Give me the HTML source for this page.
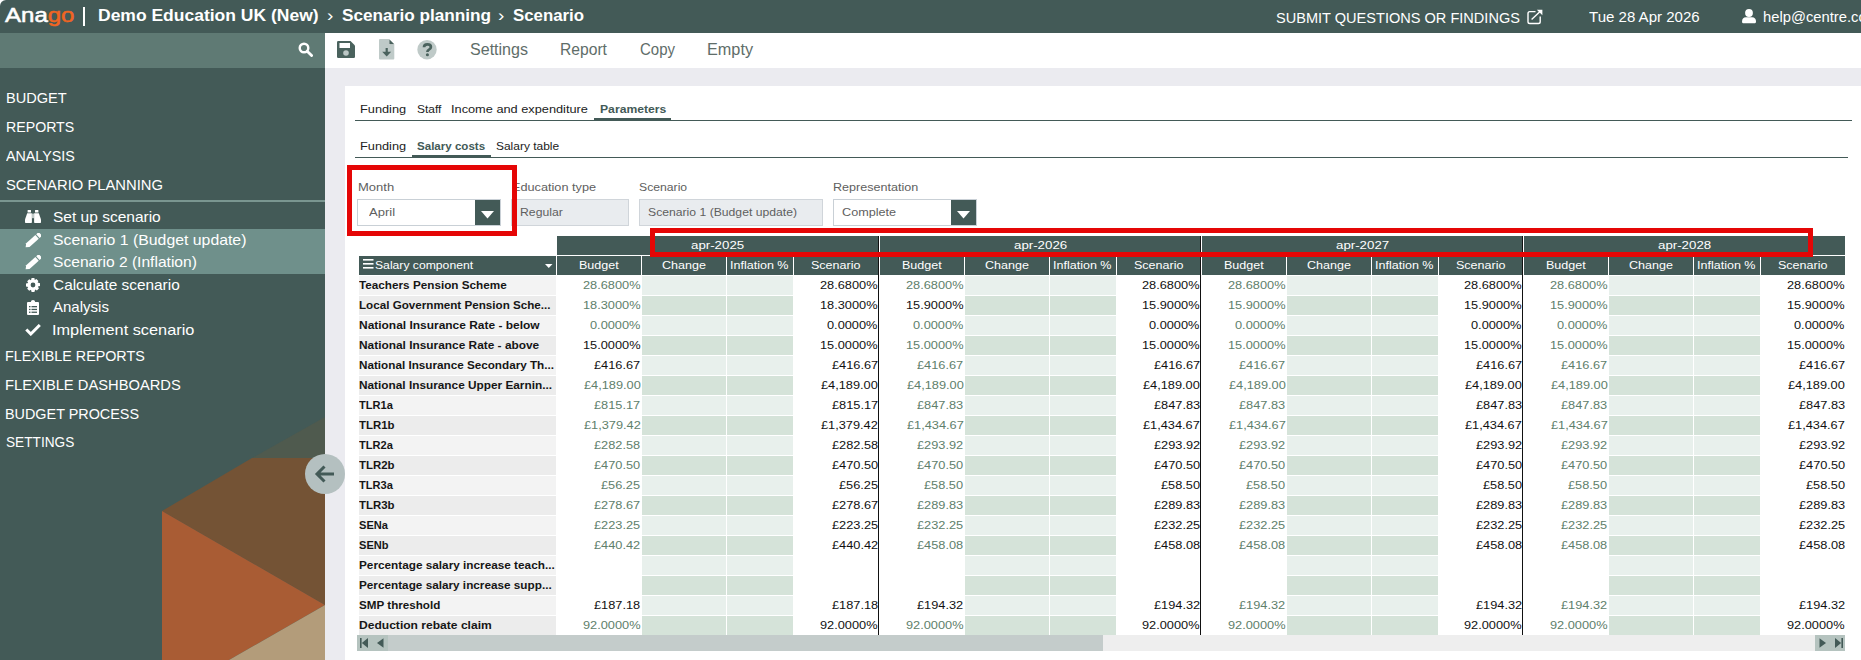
<!DOCTYPE html>
<html><head><meta charset="utf-8"><title>Scenario</title>
<style>
html,body{margin:0;padding:0;width:1861px;height:660px;overflow:hidden;background:#ebebf0}
body{position:relative;font-family:"Liberation Sans", sans-serif}
.t{position:absolute;white-space:nowrap}
</style></head><body>
<div style="position:absolute;left:0px;top:0px;width:1861px;height:660px;background:#ebebf0;"></div>
<div style="position:absolute;left:0px;top:0px;width:1861px;height:33px;background:#fff;"></div>
<div style="position:absolute;left:0px;top:0px;width:1861px;height:33px;background:#435a57;border-top-left-radius:6px;"></div>
<div style="position:absolute;left:0px;top:33px;width:325px;height:35px;background:#5f7a74;"></div>
<div style="position:absolute;left:0px;top:68px;width:325px;height:592px;background:#435a57;"></div>
<div style="position:absolute;left:325px;top:33px;width:1536px;height:35px;background:#fff;"></div>
<div style="position:absolute;left:345px;top:86px;width:1516px;height:574px;background:#fff;"></div>
<svg style="position:absolute;left:0;top:0" width="325" height="660" viewBox="0 0 325 660">
<polygon points="252,458 325,417 325,458" fill="#4f5a4e"/>
<polygon points="162,511 252,458 325,458 325,605" fill="#745335"/>
<polygon points="162,511 325,605 229,660 162,660" fill="#a95c34"/>
<polygon points="325,605 325,660 229,660" fill="#b39c7a"/>
</svg>
<div style="position:absolute;left:0px;top:229px;width:325px;height:45px;background:#6f908b;"></div>
<div style="position:absolute;left:0px;top:200px;width:325px;height:2px;background:#7a9690;"></div>
<svg style="position:absolute;left:305px;top:454px" width="40" height="40" viewBox="0 0 40 40">
<circle cx="20" cy="20" r="20" fill="#b4c0c0"/>
<path d="M12 20 H29 M19.5 12.5 L12 20 L19.5 27.5" stroke="#435a57" stroke-width="3" fill="none" stroke-linecap="butt"/>
</svg>
<div style="position:absolute;left:83.2px;top:7px;width:2px;height:19px;background:#fff;"></div>
<svg style="position:absolute;left:1526px;top:9px" width="17" height="16" viewBox="0 0 17 16">
<path d="M9.5 2.6 H3.8 Q2 2.6 2 4.4 V12.7 Q2 14.5 3.8 14.5 H12.4 Q14.2 14.5 14.2 12.7 V7.5" stroke="#fff" stroke-width="1.4" fill="none"/>
<path d="M5.6 10.6 L14.6 1.9" stroke="#fff" stroke-width="1.4" fill="none"/>
<path d="M10.8 0.7 H16.4 V6.3Z" fill="#fff"/>
</svg>
<svg style="position:absolute;left:1742px;top:9px" width="14" height="15" viewBox="0 0 14 15">
<circle cx="7" cy="4" r="3.9" fill="#fff"/>
<path d="M0 12.8 Q0 8.2 4 8.2 H10 Q14 8.2 14 12.8 Q14 14.2 13 14.2 H1 Q0 14.2 0 12.8Z" fill="#fff"/>
</svg>
<svg style="position:absolute;left:297.5px;top:42px" width="15" height="15" viewBox="0 0 15 15">
<circle cx="6" cy="6" r="4.3" stroke="#fff" stroke-width="2.4" fill="none"/>
<path d="M9.2 9.2 L13.6 13.6" stroke="#fff" stroke-width="2.8" stroke-linecap="round"/>
</svg>
<svg style="position:absolute;left:337px;top:41px" width="18" height="17" viewBox="0 0 18 17">
<path d="M1.2 0 H13.5 L18 4.5 V15.8 Q18 17 16.8 17 H1.2 Q0 17 0 15.8 V1.2 Q0 0 1.2 0Z" fill="#4a625d"/>
<rect x="2.5" y="2" width="10.5" height="5" fill="#fff"/>
<circle cx="9" cy="12" r="2.8" fill="#bcc7c5"/>
</svg>
<svg style="position:absolute;left:378.5px;top:39px" width="16" height="21" viewBox="0 0 16 21">
<path d="M1 0 H10 V5.5 H15.3 V19.5 Q15.3 20.5 14.3 20.5 H1 Q0 20.5 0 19.5 V1 Q0 0 1 0Z" fill="#bfcac8"/>
<path d="M10.3 0.3 L15.3 5.3 H10.3Z" fill="#4a625d"/>
<path d="M7.7 9 V14" stroke="#4a625d" stroke-width="2.2"/>
<path d="M3.2 12.8 H12.2 L7.7 17.6Z" fill="#4a625d"/>
</svg>
<svg style="position:absolute;left:417px;top:40px" width="20" height="20" viewBox="0 0 20 20">
<circle cx="10" cy="9.7" r="9.7" fill="#bfcac8"/>
<path d="M7 7.3 Q7 4.3 10.4 4.3 Q13.9 4.3 13.9 7.1 Q13.9 8.7 12 9.6 Q10.4 10.4 10.4 12" stroke="#4a625d" stroke-width="2.7" fill="none"/><circle cx="10.4" cy="14.7" r="1.55" fill="#4a625d"/>
</svg>
<svg style="position:absolute;left:25px;top:210px" width="16" height="13" viewBox="0 0 16 13">
<path d="M2.6 0.3 Q2.6 0 3 0 H5.6 Q6 0 6 0.3 V2.6 H2.6Z" fill="#fff"/><path d="M10 0.3 Q10 0 10.4 0 H13 Q13.4 0 13.4 0.3 V2.6 H10Z" fill="#fff"/>
<path d="M2.2 3.2 H6.9 V12.3 Q6.9 13 6.2 13 H0.7 Q0 13 0 12.3 V9.5 Z" fill="#fff"/><path d="M9.1 3.2 H13.8 L16 9.5 V12.3 Q16 13 15.3 13 H9.8 Q9.1 13 9.1 12.3Z" fill="#fff"/>
<rect x="7.2" y="3.6" width="1.6" height="4.6" fill="#dfe6e4"/>
</svg>
<svg style="position:absolute;left:25px;top:232.5px" width="16" height="15" viewBox="0 0 16 15">
<g transform="translate(8.2 7.3) rotate(-42)" fill="#fff">
<path d="M-10.2 0 L-7.2 -2.5 H5.2 V2.5 H-7.2 Z"/>
<path d="M6.3 -2.5 H8.6 Q9.6 -2.5 9.6 -1.5 V1.5 Q9.6 2.5 8.6 2.5 H6.3Z"/>
</g></svg>
<svg style="position:absolute;left:25px;top:254.8px" width="16" height="15" viewBox="0 0 16 15">
<g transform="translate(8.2 7.3) rotate(-42)" fill="#fff">
<path d="M-10.2 0 L-7.2 -2.5 H5.2 V2.5 H-7.2 Z"/>
<path d="M6.3 -2.5 H8.6 Q9.6 -2.5 9.6 -1.5 V1.5 Q9.6 2.5 8.6 2.5 H6.3Z"/>
</g></svg>
<svg style="position:absolute;left:26px;top:278px" width="14" height="14" viewBox="0 0 14 14">
<path fill="#fff" fill-rule="evenodd" d="M5.6 0 H8.4 L8.8 2 L10.4 1 L12.4 2.9 L11.6 4.6 L14 5.2 V8.0 L11.9 8.6 L12.9 10.4 L10.9 12.4 L9.2 11.4 L8.4 14 H5.6 L5.0 11.8 L3.2 12.8 L1.2 10.8 L2.2 9.0 L0 8.4 V5.6 L2.2 5.0 L1.2 3.2 L3.2 1.2 L5.0 2.2 Z M7 4.6 A2.4 2.4 0 1 0 7 9.4 A2.4 2.4 0 1 0 7 4.6Z"/>
</svg>
<svg style="position:absolute;left:27px;top:299.5px" width="12" height="15" viewBox="0 0 12 15">
<path fill="#fff" d="M1 2 H3.8 Q4 0 6 0 Q8 0 8.2 2 H11 Q12 2 12 3 V14 Q12 15 11 15 H1 Q0 15 0 14 V3 Q0 2 1 2Z"/>
<g fill="#435a57"><rect x="2" y="6" width="1.5" height="1.3"/><rect x="4.5" y="6" width="5.5" height="1.3"/>
<rect x="2" y="8.8" width="1.5" height="1.3"/><rect x="4.5" y="8.8" width="5.5" height="1.3"/>
<rect x="2" y="11.6" width="1.5" height="1.3"/><rect x="4.5" y="11.6" width="5.5" height="1.3"/></g>
</svg>
<svg style="position:absolute;left:25px;top:324px" width="16" height="12" viewBox="0 0 16 12">
<path d="M1.3 5.5 L5.8 10 L14.8 1" stroke="#fff" stroke-width="3" fill="none"/>
</svg>
<div style="position:absolute;left:355px;top:120px;width:1497px;height:1.2px;background:#435a57;"></div>
<div style="position:absolute;left:594px;top:118px;width:77px;height:3px;background:#435a57;"></div>
<div style="position:absolute;left:355px;top:157px;width:1493px;height:1.2px;background:#435a57;"></div>
<div style="position:absolute;left:412px;top:155px;width:79px;height:3px;background:#435a57;"></div>
<div style="position:absolute;left:357px;top:199px;width:142px;height:25px;border:1px solid #c9d0d6;background:#fff"></div>
<div style="position:absolute;left:475px;top:200px;width:25px;height:25px;background:#435a57;"></div>
<svg style="position:absolute;left:481px;top:210.5px" width="13" height="8" viewBox="0 0 13 8"><path d="M0 0 H13 L6.5 7.5Z" fill="#fff"/></svg>
<div style="position:absolute;left:511px;top:199px;width:116px;height:25px;border:1px solid #d0d5da;background:#e9ecef"></div>
<div style="position:absolute;left:639px;top:199px;width:182px;height:25px;border:1px solid #d0d5da;background:#e9ecef"></div>
<div style="position:absolute;left:833px;top:199px;width:142px;height:25px;border:1px solid #c9d0d6;background:#fff"></div>
<div style="position:absolute;left:951px;top:200px;width:25px;height:25px;background:#435a57;"></div>
<svg style="position:absolute;left:957px;top:210.5px" width="13" height="8" viewBox="0 0 13 8"><path d="M0 0 H13 L6.5 7.5Z" fill="#fff"/></svg>
<div style="position:absolute;left:359px;top:256px;width:197px;height:19px;background:#435a57;"></div>
<svg style="position:absolute;left:362.5px;top:259px" width="11" height="10" viewBox="0 0 11 10"><rect x="0" y="0" width="10.5" height="1.6" fill="#fff"/><rect x="0" y="4" width="10.5" height="1.6" fill="#fff"/><rect x="0" y="8" width="10.5" height="1.6" fill="#fff"/></svg>
<svg style="position:absolute;left:544.5px;top:264px" width="8" height="4" viewBox="0 0 8 4"><path d="M0 0 H7.5 L3.75 4Z" fill="#fff"/></svg>
<div style="position:absolute;left:557px;top:236px;width:321px;height:19px;background:#435a57;"></div>
<div style="position:absolute;left:557px;top:256px;width:84px;height:19px;background:#435a57;"></div>
<div style="position:absolute;left:642px;top:256px;width:84px;height:19px;background:#435a57;"></div>
<div style="position:absolute;left:727px;top:256px;width:66px;height:19px;background:#435a57;"></div>
<div style="position:absolute;left:794px;top:256px;width:84px;height:19px;background:#435a57;"></div>
<div style="position:absolute;left:880px;top:236px;width:320px;height:19px;background:#435a57;"></div>
<div style="position:absolute;left:880px;top:256px;width:84px;height:19px;background:#435a57;"></div>
<div style="position:absolute;left:965px;top:256px;width:84px;height:19px;background:#435a57;"></div>
<div style="position:absolute;left:1050px;top:256px;width:66px;height:19px;background:#435a57;"></div>
<div style="position:absolute;left:1117px;top:256px;width:83px;height:19px;background:#435a57;"></div>
<div style="position:absolute;left:1202px;top:236px;width:320px;height:19px;background:#435a57;"></div>
<div style="position:absolute;left:1202px;top:256px;width:84px;height:19px;background:#435a57;"></div>
<div style="position:absolute;left:1287px;top:256px;width:84px;height:19px;background:#435a57;"></div>
<div style="position:absolute;left:1372px;top:256px;width:66px;height:19px;background:#435a57;"></div>
<div style="position:absolute;left:1439px;top:256px;width:83px;height:19px;background:#435a57;"></div>
<div style="position:absolute;left:1524px;top:236px;width:321px;height:19px;background:#435a57;"></div>
<div style="position:absolute;left:1524px;top:256px;width:84px;height:19px;background:#435a57;"></div>
<div style="position:absolute;left:1609px;top:256px;width:84px;height:19px;background:#435a57;"></div>
<div style="position:absolute;left:1694px;top:256px;width:66px;height:19px;background:#435a57;"></div>
<div style="position:absolute;left:1761px;top:256px;width:84px;height:19px;background:#435a57;"></div>
<div style="position:absolute;left:359px;top:276px;width:197px;height:19px;background:#f3f3f3;"></div>
<div style="position:absolute;left:642px;top:276px;width:84px;height:19px;background:#e8f0ec;"></div>
<div style="position:absolute;left:727px;top:276px;width:66px;height:19px;background:#e8f0ec;"></div>
<div style="position:absolute;left:965px;top:276px;width:84px;height:19px;background:#e8f0ec;"></div>
<div style="position:absolute;left:1050px;top:276px;width:66px;height:19px;background:#e8f0ec;"></div>
<div style="position:absolute;left:1287px;top:276px;width:84px;height:19px;background:#e8f0ec;"></div>
<div style="position:absolute;left:1372px;top:276px;width:66px;height:19px;background:#e8f0ec;"></div>
<div style="position:absolute;left:1609px;top:276px;width:84px;height:19px;background:#e8f0ec;"></div>
<div style="position:absolute;left:1694px;top:276px;width:66px;height:19px;background:#e8f0ec;"></div>
<div style="position:absolute;left:359px;top:296px;width:197px;height:19px;background:#ececec;"></div>
<div style="position:absolute;left:642px;top:296px;width:84px;height:19px;background:#d5e3d9;"></div>
<div style="position:absolute;left:727px;top:296px;width:66px;height:19px;background:#d5e3d9;"></div>
<div style="position:absolute;left:965px;top:296px;width:84px;height:19px;background:#d5e3d9;"></div>
<div style="position:absolute;left:1050px;top:296px;width:66px;height:19px;background:#d5e3d9;"></div>
<div style="position:absolute;left:1287px;top:296px;width:84px;height:19px;background:#d5e3d9;"></div>
<div style="position:absolute;left:1372px;top:296px;width:66px;height:19px;background:#d5e3d9;"></div>
<div style="position:absolute;left:1609px;top:296px;width:84px;height:19px;background:#d5e3d9;"></div>
<div style="position:absolute;left:1694px;top:296px;width:66px;height:19px;background:#d5e3d9;"></div>
<div style="position:absolute;left:359px;top:316px;width:197px;height:19px;background:#f3f3f3;"></div>
<div style="position:absolute;left:642px;top:316px;width:84px;height:19px;background:#e8f0ec;"></div>
<div style="position:absolute;left:727px;top:316px;width:66px;height:19px;background:#e8f0ec;"></div>
<div style="position:absolute;left:965px;top:316px;width:84px;height:19px;background:#e8f0ec;"></div>
<div style="position:absolute;left:1050px;top:316px;width:66px;height:19px;background:#e8f0ec;"></div>
<div style="position:absolute;left:1287px;top:316px;width:84px;height:19px;background:#e8f0ec;"></div>
<div style="position:absolute;left:1372px;top:316px;width:66px;height:19px;background:#e8f0ec;"></div>
<div style="position:absolute;left:1609px;top:316px;width:84px;height:19px;background:#e8f0ec;"></div>
<div style="position:absolute;left:1694px;top:316px;width:66px;height:19px;background:#e8f0ec;"></div>
<div style="position:absolute;left:359px;top:336px;width:197px;height:19px;background:#ececec;"></div>
<div style="position:absolute;left:642px;top:336px;width:84px;height:19px;background:#d5e3d9;"></div>
<div style="position:absolute;left:727px;top:336px;width:66px;height:19px;background:#d5e3d9;"></div>
<div style="position:absolute;left:965px;top:336px;width:84px;height:19px;background:#d5e3d9;"></div>
<div style="position:absolute;left:1050px;top:336px;width:66px;height:19px;background:#d5e3d9;"></div>
<div style="position:absolute;left:1287px;top:336px;width:84px;height:19px;background:#d5e3d9;"></div>
<div style="position:absolute;left:1372px;top:336px;width:66px;height:19px;background:#d5e3d9;"></div>
<div style="position:absolute;left:1609px;top:336px;width:84px;height:19px;background:#d5e3d9;"></div>
<div style="position:absolute;left:1694px;top:336px;width:66px;height:19px;background:#d5e3d9;"></div>
<div style="position:absolute;left:359px;top:356px;width:197px;height:19px;background:#f3f3f3;"></div>
<div style="position:absolute;left:642px;top:356px;width:84px;height:19px;background:#e8f0ec;"></div>
<div style="position:absolute;left:727px;top:356px;width:66px;height:19px;background:#e8f0ec;"></div>
<div style="position:absolute;left:965px;top:356px;width:84px;height:19px;background:#e8f0ec;"></div>
<div style="position:absolute;left:1050px;top:356px;width:66px;height:19px;background:#e8f0ec;"></div>
<div style="position:absolute;left:1287px;top:356px;width:84px;height:19px;background:#e8f0ec;"></div>
<div style="position:absolute;left:1372px;top:356px;width:66px;height:19px;background:#e8f0ec;"></div>
<div style="position:absolute;left:1609px;top:356px;width:84px;height:19px;background:#e8f0ec;"></div>
<div style="position:absolute;left:1694px;top:356px;width:66px;height:19px;background:#e8f0ec;"></div>
<div style="position:absolute;left:359px;top:376px;width:197px;height:19px;background:#ececec;"></div>
<div style="position:absolute;left:642px;top:376px;width:84px;height:19px;background:#d5e3d9;"></div>
<div style="position:absolute;left:727px;top:376px;width:66px;height:19px;background:#d5e3d9;"></div>
<div style="position:absolute;left:965px;top:376px;width:84px;height:19px;background:#d5e3d9;"></div>
<div style="position:absolute;left:1050px;top:376px;width:66px;height:19px;background:#d5e3d9;"></div>
<div style="position:absolute;left:1287px;top:376px;width:84px;height:19px;background:#d5e3d9;"></div>
<div style="position:absolute;left:1372px;top:376px;width:66px;height:19px;background:#d5e3d9;"></div>
<div style="position:absolute;left:1609px;top:376px;width:84px;height:19px;background:#d5e3d9;"></div>
<div style="position:absolute;left:1694px;top:376px;width:66px;height:19px;background:#d5e3d9;"></div>
<div style="position:absolute;left:359px;top:396px;width:197px;height:19px;background:#f3f3f3;"></div>
<div style="position:absolute;left:642px;top:396px;width:84px;height:19px;background:#e8f0ec;"></div>
<div style="position:absolute;left:727px;top:396px;width:66px;height:19px;background:#e8f0ec;"></div>
<div style="position:absolute;left:965px;top:396px;width:84px;height:19px;background:#e8f0ec;"></div>
<div style="position:absolute;left:1050px;top:396px;width:66px;height:19px;background:#e8f0ec;"></div>
<div style="position:absolute;left:1287px;top:396px;width:84px;height:19px;background:#e8f0ec;"></div>
<div style="position:absolute;left:1372px;top:396px;width:66px;height:19px;background:#e8f0ec;"></div>
<div style="position:absolute;left:1609px;top:396px;width:84px;height:19px;background:#e8f0ec;"></div>
<div style="position:absolute;left:1694px;top:396px;width:66px;height:19px;background:#e8f0ec;"></div>
<div style="position:absolute;left:359px;top:416px;width:197px;height:19px;background:#ececec;"></div>
<div style="position:absolute;left:642px;top:416px;width:84px;height:19px;background:#d5e3d9;"></div>
<div style="position:absolute;left:727px;top:416px;width:66px;height:19px;background:#d5e3d9;"></div>
<div style="position:absolute;left:965px;top:416px;width:84px;height:19px;background:#d5e3d9;"></div>
<div style="position:absolute;left:1050px;top:416px;width:66px;height:19px;background:#d5e3d9;"></div>
<div style="position:absolute;left:1287px;top:416px;width:84px;height:19px;background:#d5e3d9;"></div>
<div style="position:absolute;left:1372px;top:416px;width:66px;height:19px;background:#d5e3d9;"></div>
<div style="position:absolute;left:1609px;top:416px;width:84px;height:19px;background:#d5e3d9;"></div>
<div style="position:absolute;left:1694px;top:416px;width:66px;height:19px;background:#d5e3d9;"></div>
<div style="position:absolute;left:359px;top:436px;width:197px;height:19px;background:#f3f3f3;"></div>
<div style="position:absolute;left:642px;top:436px;width:84px;height:19px;background:#e8f0ec;"></div>
<div style="position:absolute;left:727px;top:436px;width:66px;height:19px;background:#e8f0ec;"></div>
<div style="position:absolute;left:965px;top:436px;width:84px;height:19px;background:#e8f0ec;"></div>
<div style="position:absolute;left:1050px;top:436px;width:66px;height:19px;background:#e8f0ec;"></div>
<div style="position:absolute;left:1287px;top:436px;width:84px;height:19px;background:#e8f0ec;"></div>
<div style="position:absolute;left:1372px;top:436px;width:66px;height:19px;background:#e8f0ec;"></div>
<div style="position:absolute;left:1609px;top:436px;width:84px;height:19px;background:#e8f0ec;"></div>
<div style="position:absolute;left:1694px;top:436px;width:66px;height:19px;background:#e8f0ec;"></div>
<div style="position:absolute;left:359px;top:456px;width:197px;height:19px;background:#ececec;"></div>
<div style="position:absolute;left:642px;top:456px;width:84px;height:19px;background:#d5e3d9;"></div>
<div style="position:absolute;left:727px;top:456px;width:66px;height:19px;background:#d5e3d9;"></div>
<div style="position:absolute;left:965px;top:456px;width:84px;height:19px;background:#d5e3d9;"></div>
<div style="position:absolute;left:1050px;top:456px;width:66px;height:19px;background:#d5e3d9;"></div>
<div style="position:absolute;left:1287px;top:456px;width:84px;height:19px;background:#d5e3d9;"></div>
<div style="position:absolute;left:1372px;top:456px;width:66px;height:19px;background:#d5e3d9;"></div>
<div style="position:absolute;left:1609px;top:456px;width:84px;height:19px;background:#d5e3d9;"></div>
<div style="position:absolute;left:1694px;top:456px;width:66px;height:19px;background:#d5e3d9;"></div>
<div style="position:absolute;left:359px;top:476px;width:197px;height:19px;background:#f3f3f3;"></div>
<div style="position:absolute;left:642px;top:476px;width:84px;height:19px;background:#e8f0ec;"></div>
<div style="position:absolute;left:727px;top:476px;width:66px;height:19px;background:#e8f0ec;"></div>
<div style="position:absolute;left:965px;top:476px;width:84px;height:19px;background:#e8f0ec;"></div>
<div style="position:absolute;left:1050px;top:476px;width:66px;height:19px;background:#e8f0ec;"></div>
<div style="position:absolute;left:1287px;top:476px;width:84px;height:19px;background:#e8f0ec;"></div>
<div style="position:absolute;left:1372px;top:476px;width:66px;height:19px;background:#e8f0ec;"></div>
<div style="position:absolute;left:1609px;top:476px;width:84px;height:19px;background:#e8f0ec;"></div>
<div style="position:absolute;left:1694px;top:476px;width:66px;height:19px;background:#e8f0ec;"></div>
<div style="position:absolute;left:359px;top:496px;width:197px;height:19px;background:#ececec;"></div>
<div style="position:absolute;left:642px;top:496px;width:84px;height:19px;background:#d5e3d9;"></div>
<div style="position:absolute;left:727px;top:496px;width:66px;height:19px;background:#d5e3d9;"></div>
<div style="position:absolute;left:965px;top:496px;width:84px;height:19px;background:#d5e3d9;"></div>
<div style="position:absolute;left:1050px;top:496px;width:66px;height:19px;background:#d5e3d9;"></div>
<div style="position:absolute;left:1287px;top:496px;width:84px;height:19px;background:#d5e3d9;"></div>
<div style="position:absolute;left:1372px;top:496px;width:66px;height:19px;background:#d5e3d9;"></div>
<div style="position:absolute;left:1609px;top:496px;width:84px;height:19px;background:#d5e3d9;"></div>
<div style="position:absolute;left:1694px;top:496px;width:66px;height:19px;background:#d5e3d9;"></div>
<div style="position:absolute;left:359px;top:516px;width:197px;height:19px;background:#f3f3f3;"></div>
<div style="position:absolute;left:642px;top:516px;width:84px;height:19px;background:#e8f0ec;"></div>
<div style="position:absolute;left:727px;top:516px;width:66px;height:19px;background:#e8f0ec;"></div>
<div style="position:absolute;left:965px;top:516px;width:84px;height:19px;background:#e8f0ec;"></div>
<div style="position:absolute;left:1050px;top:516px;width:66px;height:19px;background:#e8f0ec;"></div>
<div style="position:absolute;left:1287px;top:516px;width:84px;height:19px;background:#e8f0ec;"></div>
<div style="position:absolute;left:1372px;top:516px;width:66px;height:19px;background:#e8f0ec;"></div>
<div style="position:absolute;left:1609px;top:516px;width:84px;height:19px;background:#e8f0ec;"></div>
<div style="position:absolute;left:1694px;top:516px;width:66px;height:19px;background:#e8f0ec;"></div>
<div style="position:absolute;left:359px;top:536px;width:197px;height:19px;background:#ececec;"></div>
<div style="position:absolute;left:642px;top:536px;width:84px;height:19px;background:#d5e3d9;"></div>
<div style="position:absolute;left:727px;top:536px;width:66px;height:19px;background:#d5e3d9;"></div>
<div style="position:absolute;left:965px;top:536px;width:84px;height:19px;background:#d5e3d9;"></div>
<div style="position:absolute;left:1050px;top:536px;width:66px;height:19px;background:#d5e3d9;"></div>
<div style="position:absolute;left:1287px;top:536px;width:84px;height:19px;background:#d5e3d9;"></div>
<div style="position:absolute;left:1372px;top:536px;width:66px;height:19px;background:#d5e3d9;"></div>
<div style="position:absolute;left:1609px;top:536px;width:84px;height:19px;background:#d5e3d9;"></div>
<div style="position:absolute;left:1694px;top:536px;width:66px;height:19px;background:#d5e3d9;"></div>
<div style="position:absolute;left:359px;top:556px;width:197px;height:19px;background:#f3f3f3;"></div>
<div style="position:absolute;left:642px;top:556px;width:84px;height:19px;background:#e8f0ec;"></div>
<div style="position:absolute;left:727px;top:556px;width:66px;height:19px;background:#e8f0ec;"></div>
<div style="position:absolute;left:965px;top:556px;width:84px;height:19px;background:#e8f0ec;"></div>
<div style="position:absolute;left:1050px;top:556px;width:66px;height:19px;background:#e8f0ec;"></div>
<div style="position:absolute;left:1287px;top:556px;width:84px;height:19px;background:#e8f0ec;"></div>
<div style="position:absolute;left:1372px;top:556px;width:66px;height:19px;background:#e8f0ec;"></div>
<div style="position:absolute;left:1609px;top:556px;width:84px;height:19px;background:#e8f0ec;"></div>
<div style="position:absolute;left:1694px;top:556px;width:66px;height:19px;background:#e8f0ec;"></div>
<div style="position:absolute;left:359px;top:576px;width:197px;height:19px;background:#ececec;"></div>
<div style="position:absolute;left:642px;top:576px;width:84px;height:19px;background:#d5e3d9;"></div>
<div style="position:absolute;left:727px;top:576px;width:66px;height:19px;background:#d5e3d9;"></div>
<div style="position:absolute;left:965px;top:576px;width:84px;height:19px;background:#d5e3d9;"></div>
<div style="position:absolute;left:1050px;top:576px;width:66px;height:19px;background:#d5e3d9;"></div>
<div style="position:absolute;left:1287px;top:576px;width:84px;height:19px;background:#d5e3d9;"></div>
<div style="position:absolute;left:1372px;top:576px;width:66px;height:19px;background:#d5e3d9;"></div>
<div style="position:absolute;left:1609px;top:576px;width:84px;height:19px;background:#d5e3d9;"></div>
<div style="position:absolute;left:1694px;top:576px;width:66px;height:19px;background:#d5e3d9;"></div>
<div style="position:absolute;left:359px;top:596px;width:197px;height:19px;background:#f3f3f3;"></div>
<div style="position:absolute;left:642px;top:596px;width:84px;height:19px;background:#e8f0ec;"></div>
<div style="position:absolute;left:727px;top:596px;width:66px;height:19px;background:#e8f0ec;"></div>
<div style="position:absolute;left:965px;top:596px;width:84px;height:19px;background:#e8f0ec;"></div>
<div style="position:absolute;left:1050px;top:596px;width:66px;height:19px;background:#e8f0ec;"></div>
<div style="position:absolute;left:1287px;top:596px;width:84px;height:19px;background:#e8f0ec;"></div>
<div style="position:absolute;left:1372px;top:596px;width:66px;height:19px;background:#e8f0ec;"></div>
<div style="position:absolute;left:1609px;top:596px;width:84px;height:19px;background:#e8f0ec;"></div>
<div style="position:absolute;left:1694px;top:596px;width:66px;height:19px;background:#e8f0ec;"></div>
<div style="position:absolute;left:359px;top:616px;width:197px;height:19px;background:#ececec;"></div>
<div style="position:absolute;left:642px;top:616px;width:84px;height:19px;background:#d5e3d9;"></div>
<div style="position:absolute;left:727px;top:616px;width:66px;height:19px;background:#d5e3d9;"></div>
<div style="position:absolute;left:965px;top:616px;width:84px;height:19px;background:#d5e3d9;"></div>
<div style="position:absolute;left:1050px;top:616px;width:66px;height:19px;background:#d5e3d9;"></div>
<div style="position:absolute;left:1287px;top:616px;width:84px;height:19px;background:#d5e3d9;"></div>
<div style="position:absolute;left:1372px;top:616px;width:66px;height:19px;background:#d5e3d9;"></div>
<div style="position:absolute;left:1609px;top:616px;width:84px;height:19px;background:#d5e3d9;"></div>
<div style="position:absolute;left:1694px;top:616px;width:66px;height:19px;background:#d5e3d9;"></div>
<div style="position:absolute;left:878px;top:236px;width:1px;height:400px;background:#111;"></div>
<div style="position:absolute;left:1200px;top:236px;width:1px;height:400px;background:#111;"></div>
<div style="position:absolute;left:1522px;top:236px;width:1px;height:400px;background:#111;"></div>
<div style="position:absolute;left:357px;top:635px;width:1488px;height:16px;background:#eeeeee;"></div>
<div style="position:absolute;left:357px;top:635px;width:746px;height:16px;background:#c4cccb;"></div>
<div style="position:absolute;left:357px;top:635px;width:31px;height:16px;background:#b5c3bf;"></div>
<div style="position:absolute;left:1815px;top:635px;width:30px;height:16px;background:#b5c3bf;"></div>
<svg style="position:absolute;left:359px;top:637px" width="28" height="12" viewBox="0 0 28 12">
<rect x="1" y="1" width="1.6" height="10" fill="#435a57"/><path d="M9 1 V11 L2.8 6Z" fill="#435a57"/>
<path d="M24.5 1.2 V10.8 L18 6Z" fill="#435a57"/></svg>
<svg style="position:absolute;left:1816px;top:637px" width="28" height="12" viewBox="0 0 28 12">
<path d="M3.5 1.2 V10.8 L10 6Z" fill="#435a57"/>
<path d="M19 1 V11 L25.2 6Z" fill="#435a57"/><rect x="25.4" y="1" width="1.6" height="10" fill="#435a57"/></svg>
<div style="position:absolute;left:347px;top:165px;width:160px;height:61px;border:5px solid #e50606;z-index:5"></div>
<div style="position:absolute;left:650px;top:228px;width:1153px;height:19px;border:5px solid #e50606;z-index:5"></div>
<div class="t" style="left:4.50px;top:4.57px;font-size:20px;line-height:20px;font-weight:400;color:#fff;transform:scaleX(1.2009);transform-origin:left;-webkit-text-stroke:0.5px currentColor;">Ana<span style="color:#f26522">go</span></div>
<div class="t" style="left:97.94px;top:7.03px;font-size:16.5px;line-height:16.5px;font-weight:700;color:#fff;transform:scaleX(1.0600);transform-origin:left;">Demo Education UK (New)</div>
<div class="t" style="left:326.80px;top:7.01px;font-size:17px;line-height:17px;font-weight:400;color:#fff;transform:scaleX(1.1200);transform-origin:left;">›</div>
<div class="t" style="left:341.50px;top:7.03px;font-size:16.5px;line-height:16.5px;font-weight:700;color:#fff;transform:scaleX(1.0427);transform-origin:left;">Scenario planning</div>
<div class="t" style="left:498.20px;top:7.01px;font-size:17px;line-height:17px;font-weight:400;color:#fff;transform:scaleX(1.1200);transform-origin:left;">›</div>
<div class="t" style="left:513.00px;top:7.03px;font-size:16.5px;line-height:16.5px;font-weight:700;color:#fff;transform:scaleX(1.0198);transform-origin:left;">Scenario</div>
<div class="t" style="left:1275.50px;top:9.65px;font-size:15.3px;line-height:15.3px;font-weight:400;color:#fff;transform:scaleX(0.9514);transform-origin:left;">SUBMIT QUESTIONS OR FINDINGS</div>
<div class="t" style="left:1589.00px;top:8.65px;font-size:15.3px;line-height:15.3px;font-weight:400;color:#fff;transform:scaleX(0.9833);transform-origin:left;">Tue 28 Apr 2026</div>
<div class="t" style="left:1763.04px;top:8.65px;font-size:15.3px;line-height:15.3px;font-weight:400;color:#fff;transform:scaleX(0.9650);transform-origin:left;">help@centre.co.uk</div>
<div class="t" style="left:469.50px;top:41.96px;font-size:16px;line-height:16px;font-weight:400;color:#606d69;transform:scaleX(1.0032);transform-origin:left;">Settings</div>
<div class="t" style="left:559.52px;top:41.96px;font-size:16px;line-height:16px;font-weight:400;color:#606d69;transform:scaleX(0.9773);transform-origin:left;">Report</div>
<div class="t" style="left:640.00px;top:41.96px;font-size:16px;line-height:16px;font-weight:400;color:#606d69;transform:scaleX(0.9370);transform-origin:left;">Copy</div>
<div class="t" style="left:706.99px;top:41.96px;font-size:16px;line-height:16px;font-weight:400;color:#606d69;transform:scaleX(1.0148);transform-origin:left;">Empty</div>
<div class="t" style="left:5.76px;top:89.88px;font-size:15.5px;line-height:15.5px;font-weight:400;color:#fff;transform:scaleX(0.9404);transform-origin:left;">BUDGET</div>
<div class="t" style="left:5.79px;top:118.88px;font-size:15.5px;line-height:15.5px;font-weight:400;color:#fff;transform:scaleX(0.9139);transform-origin:left;">REPORTS</div>
<div class="t" style="left:6.00px;top:147.88px;font-size:15.5px;line-height:15.5px;font-weight:400;color:#fff;transform:scaleX(0.9216);transform-origin:left;">ANALYSIS</div>
<div class="t" style="left:6.00px;top:176.88px;font-size:15.5px;line-height:15.5px;font-weight:400;color:#fff;transform:scaleX(0.9544);transform-origin:left;">SCENARIO PLANNING</div>
<div class="t" style="left:52.90px;top:210.47px;font-size:14.8px;line-height:14.8px;font-weight:400;color:#fff;transform:scaleX(1.0479);transform-origin:left;">Set up scenario</div>
<div class="t" style="left:52.90px;top:233.27px;font-size:14.8px;line-height:14.8px;font-weight:400;color:#fff;transform:scaleX(1.0688);transform-origin:left;">Scenario 1 (Budget update)</div>
<div class="t" style="left:52.90px;top:255.47px;font-size:14.8px;line-height:14.8px;font-weight:400;color:#fff;transform:scaleX(1.0541);transform-origin:left;">Scenario 2 (Inflation)</div>
<div class="t" style="left:52.90px;top:277.97px;font-size:14.8px;line-height:14.8px;font-weight:400;color:#fff;transform:scaleX(1.0412);transform-origin:left;">Calculate scenario</div>
<div class="t" style="left:52.90px;top:300.47px;font-size:14.8px;line-height:14.8px;font-weight:400;color:#fff;transform:scaleX(1.0146);transform-origin:left;">Analysis</div>
<div class="t" style="left:51.80px;top:322.97px;font-size:14.8px;line-height:14.8px;font-weight:400;color:#fff;transform:scaleX(1.1025);transform-origin:left;">Implement scenario</div>
<div class="t" style="left:5.08px;top:347.88px;font-size:15.5px;line-height:15.5px;font-weight:400;color:#fff;transform:scaleX(0.9234);transform-origin:left;">FLEXIBLE REPORTS</div>
<div class="t" style="left:5.05px;top:377.38px;font-size:15.5px;line-height:15.5px;font-weight:400;color:#fff;transform:scaleX(0.9491);transform-origin:left;">FLEXIBLE DASHBOARDS</div>
<div class="t" style="left:5.07px;top:405.88px;font-size:15.5px;line-height:15.5px;font-weight:400;color:#fff;transform:scaleX(0.9278);transform-origin:left;">BUDGET PROCESS</div>
<div class="t" style="left:6.00px;top:434.38px;font-size:15.5px;line-height:15.5px;font-weight:400;color:#fff;transform:scaleX(0.8812);transform-origin:left;">SETTINGS</div>
<div class="t" style="left:360.00px;top:103.99px;font-size:11px;line-height:11px;font-weight:400;color:#222;transform:scaleX(1.1606);transform-origin:left;">Funding</div>
<div class="t" style="left:417.00px;top:103.99px;font-size:11px;line-height:11px;font-weight:400;color:#222;transform:scaleX(1.0869);transform-origin:left;">Staff</div>
<div class="t" style="left:451.24px;top:103.99px;font-size:11px;line-height:11px;font-weight:400;color:#222;transform:scaleX(1.1599);transform-origin:left;">Income and expenditure</div>
<div class="t" style="left:599.60px;top:103.99px;font-size:11px;line-height:11px;font-weight:700;color:#435a57;transform:scaleX(1.1068);transform-origin:left;">Parameters</div>
<div class="t" style="left:360.00px;top:141.09px;font-size:11px;line-height:11px;font-weight:400;color:#222;transform:scaleX(1.1606);transform-origin:left;">Funding</div>
<div class="t" style="left:417.00px;top:141.09px;font-size:11px;line-height:11px;font-weight:700;color:#435a57;transform:scaleX(1.0510);transform-origin:left;">Salary costs</div>
<div class="t" style="left:496.00px;top:141.09px;font-size:11px;line-height:11px;font-weight:400;color:#222;transform:scaleX(1.0868);transform-origin:left;">Salary table</div>
<div class="t" style="left:357.60px;top:181.57px;font-size:11.5px;line-height:11.5px;font-weight:400;color:#606060;transform:scaleX(1.1310);transform-origin:left;">Month</div>
<div class="t" style="left:512.00px;top:181.57px;font-size:11.5px;line-height:11.5px;font-weight:400;color:#606060;transform:scaleX(1.1046);transform-origin:left;">Education type</div>
<div class="t" style="left:639.00px;top:181.57px;font-size:11.5px;line-height:11.5px;font-weight:400;color:#606060;transform:scaleX(1.0602);transform-origin:left;">Scenario</div>
<div class="t" style="left:833.00px;top:181.57px;font-size:11.5px;line-height:11.5px;font-weight:400;color:#606060;transform:scaleX(1.0928);transform-origin:left;">Representation</div>
<div class="t" style="left:369.00px;top:207.27px;font-size:11.5px;line-height:11.5px;font-weight:400;color:#5f5f5f;transform:scaleX(1.1358);transform-origin:left;">April</div>
<div class="t" style="left:520.00px;top:207.27px;font-size:11.5px;line-height:11.5px;font-weight:400;color:#5f5f5f;transform:scaleX(1.0632);transform-origin:left;">Regular</div>
<div class="t" style="left:647.80px;top:207.27px;font-size:11.5px;line-height:11.5px;font-weight:400;color:#5f5f5f;transform:scaleX(1.0595);transform-origin:left;">Scenario 1 (Budget update)</div>
<div class="t" style="left:842.00px;top:207.27px;font-size:11.5px;line-height:11.5px;font-weight:400;color:#5f5f5f;transform:scaleX(1.0999);transform-origin:left;">Complete</div>
<div class="t" style="left:375.00px;top:260.29px;font-size:11px;line-height:11px;font-weight:400;color:#fff;transform:scaleX(1.1060);transform-origin:left;">Salary component</div>
<div class="t" style="left:691.14px;top:240.27px;font-size:11.5px;line-height:11.5px;font-weight:400;color:#fff;transform:scaleX(1.1550);transform-origin:left;">apr-2025</div>
<div class="t" style="left:578.64px;top:260.42px;font-size:11.2px;line-height:11.2px;font-weight:400;color:#fff;transform:scaleX(1.1200);transform-origin:left;">Budget</div>
<div class="t" style="left:662.18px;top:260.42px;font-size:11.2px;line-height:11.2px;font-weight:400;color:#fff;transform:scaleX(1.1200);transform-origin:left;">Change</div>
<div class="t" style="left:730.16px;top:260.42px;font-size:11.2px;line-height:11.2px;font-weight:400;color:#fff;transform:scaleX(1.1200);transform-origin:left;">Inflation %</div>
<div class="t" style="left:811.40px;top:260.42px;font-size:11.2px;line-height:11.2px;font-weight:400;color:#fff;transform:scaleX(1.1200);transform-origin:left;">Scenario</div>
<div class="t" style="left:1013.64px;top:240.27px;font-size:11.5px;line-height:11.5px;font-weight:400;color:#fff;transform:scaleX(1.1550);transform-origin:left;">apr-2026</div>
<div class="t" style="left:901.64px;top:260.42px;font-size:11.2px;line-height:11.2px;font-weight:400;color:#fff;transform:scaleX(1.1200);transform-origin:left;">Budget</div>
<div class="t" style="left:985.18px;top:260.42px;font-size:11.2px;line-height:11.2px;font-weight:400;color:#fff;transform:scaleX(1.1200);transform-origin:left;">Change</div>
<div class="t" style="left:1053.16px;top:260.42px;font-size:11.2px;line-height:11.2px;font-weight:400;color:#fff;transform:scaleX(1.1200);transform-origin:left;">Inflation %</div>
<div class="t" style="left:1133.90px;top:260.42px;font-size:11.2px;line-height:11.2px;font-weight:400;color:#fff;transform:scaleX(1.1200);transform-origin:left;">Scenario</div>
<div class="t" style="left:1335.64px;top:240.27px;font-size:11.5px;line-height:11.5px;font-weight:400;color:#fff;transform:scaleX(1.1550);transform-origin:left;">apr-2027</div>
<div class="t" style="left:1223.64px;top:260.42px;font-size:11.2px;line-height:11.2px;font-weight:400;color:#fff;transform:scaleX(1.1200);transform-origin:left;">Budget</div>
<div class="t" style="left:1307.18px;top:260.42px;font-size:11.2px;line-height:11.2px;font-weight:400;color:#fff;transform:scaleX(1.1200);transform-origin:left;">Change</div>
<div class="t" style="left:1375.16px;top:260.42px;font-size:11.2px;line-height:11.2px;font-weight:400;color:#fff;transform:scaleX(1.1200);transform-origin:left;">Inflation %</div>
<div class="t" style="left:1455.90px;top:260.42px;font-size:11.2px;line-height:11.2px;font-weight:400;color:#fff;transform:scaleX(1.1200);transform-origin:left;">Scenario</div>
<div class="t" style="left:1658.14px;top:240.27px;font-size:11.5px;line-height:11.5px;font-weight:400;color:#fff;transform:scaleX(1.1550);transform-origin:left;">apr-2028</div>
<div class="t" style="left:1545.64px;top:260.42px;font-size:11.2px;line-height:11.2px;font-weight:400;color:#fff;transform:scaleX(1.1200);transform-origin:left;">Budget</div>
<div class="t" style="left:1629.18px;top:260.42px;font-size:11.2px;line-height:11.2px;font-weight:400;color:#fff;transform:scaleX(1.1200);transform-origin:left;">Change</div>
<div class="t" style="left:1697.16px;top:260.42px;font-size:11.2px;line-height:11.2px;font-weight:400;color:#fff;transform:scaleX(1.1200);transform-origin:left;">Inflation %</div>
<div class="t" style="left:1778.40px;top:260.42px;font-size:11.2px;line-height:11.2px;font-weight:400;color:#fff;transform:scaleX(1.1200);transform-origin:left;">Scenario</div>
<div class="t" style="left:359.20px;top:280.27px;font-size:11.5px;line-height:11.5px;font-weight:700;color:#161616;transform:scaleX(1.0195);transform-origin:left;">Teachers Pension Scheme</div>
<div class="t" style="left:582.76px;top:280.27px;font-size:11.5px;line-height:11.5px;font-weight:400;color:#60806b;transform:scaleX(1.1100);transform-origin:left;">28.6800%</div>
<div class="t" style="left:820.16px;top:280.27px;font-size:11.5px;line-height:11.5px;font-weight:400;color:#111;transform:scaleX(1.1100);transform-origin:left;">28.6800%</div>
<div class="t" style="left:905.76px;top:280.27px;font-size:11.5px;line-height:11.5px;font-weight:400;color:#60806b;transform:scaleX(1.1100);transform-origin:left;">28.6800%</div>
<div class="t" style="left:1142.16px;top:280.27px;font-size:11.5px;line-height:11.5px;font-weight:400;color:#111;transform:scaleX(1.1100);transform-origin:left;">28.6800%</div>
<div class="t" style="left:1227.76px;top:280.27px;font-size:11.5px;line-height:11.5px;font-weight:400;color:#60806b;transform:scaleX(1.1100);transform-origin:left;">28.6800%</div>
<div class="t" style="left:1464.16px;top:280.27px;font-size:11.5px;line-height:11.5px;font-weight:400;color:#111;transform:scaleX(1.1100);transform-origin:left;">28.6800%</div>
<div class="t" style="left:1549.76px;top:280.27px;font-size:11.5px;line-height:11.5px;font-weight:400;color:#60806b;transform:scaleX(1.1100);transform-origin:left;">28.6800%</div>
<div class="t" style="left:1787.16px;top:280.27px;font-size:11.5px;line-height:11.5px;font-weight:400;color:#111;transform:scaleX(1.1100);transform-origin:left;">28.6800%</div>
<div class="t" style="left:359.20px;top:300.27px;font-size:11.5px;line-height:11.5px;font-weight:700;color:#161616;transform:scaleX(1.0124);transform-origin:left;">Local Government Pension Sche...</div>
<div class="t" style="left:582.76px;top:300.27px;font-size:11.5px;line-height:11.5px;font-weight:400;color:#60806b;transform:scaleX(1.1100);transform-origin:left;">18.3000%</div>
<div class="t" style="left:820.16px;top:300.27px;font-size:11.5px;line-height:11.5px;font-weight:400;color:#111;transform:scaleX(1.1100);transform-origin:left;">18.3000%</div>
<div class="t" style="left:905.76px;top:300.27px;font-size:11.5px;line-height:11.5px;font-weight:400;color:#111;transform:scaleX(1.1100);transform-origin:left;">15.9000%</div>
<div class="t" style="left:1142.16px;top:300.27px;font-size:11.5px;line-height:11.5px;font-weight:400;color:#111;transform:scaleX(1.1100);transform-origin:left;">15.9000%</div>
<div class="t" style="left:1227.76px;top:300.27px;font-size:11.5px;line-height:11.5px;font-weight:400;color:#60806b;transform:scaleX(1.1100);transform-origin:left;">15.9000%</div>
<div class="t" style="left:1464.16px;top:300.27px;font-size:11.5px;line-height:11.5px;font-weight:400;color:#111;transform:scaleX(1.1100);transform-origin:left;">15.9000%</div>
<div class="t" style="left:1549.76px;top:300.27px;font-size:11.5px;line-height:11.5px;font-weight:400;color:#60806b;transform:scaleX(1.1100);transform-origin:left;">15.9000%</div>
<div class="t" style="left:1787.16px;top:300.27px;font-size:11.5px;line-height:11.5px;font-weight:400;color:#111;transform:scaleX(1.1100);transform-origin:left;">15.9000%</div>
<div class="t" style="left:359.20px;top:320.27px;font-size:11.5px;line-height:11.5px;font-weight:700;color:#161616;transform:scaleX(1.0387);transform-origin:left;">National Insurance Rate - below</div>
<div class="t" style="left:589.86px;top:320.27px;font-size:11.5px;line-height:11.5px;font-weight:400;color:#60806b;transform:scaleX(1.1100);transform-origin:left;">0.0000%</div>
<div class="t" style="left:827.26px;top:320.27px;font-size:11.5px;line-height:11.5px;font-weight:400;color:#111;transform:scaleX(1.1100);transform-origin:left;">0.0000%</div>
<div class="t" style="left:912.86px;top:320.27px;font-size:11.5px;line-height:11.5px;font-weight:400;color:#60806b;transform:scaleX(1.1100);transform-origin:left;">0.0000%</div>
<div class="t" style="left:1149.26px;top:320.27px;font-size:11.5px;line-height:11.5px;font-weight:400;color:#111;transform:scaleX(1.1100);transform-origin:left;">0.0000%</div>
<div class="t" style="left:1234.86px;top:320.27px;font-size:11.5px;line-height:11.5px;font-weight:400;color:#60806b;transform:scaleX(1.1100);transform-origin:left;">0.0000%</div>
<div class="t" style="left:1471.26px;top:320.27px;font-size:11.5px;line-height:11.5px;font-weight:400;color:#111;transform:scaleX(1.1100);transform-origin:left;">0.0000%</div>
<div class="t" style="left:1556.86px;top:320.27px;font-size:11.5px;line-height:11.5px;font-weight:400;color:#60806b;transform:scaleX(1.1100);transform-origin:left;">0.0000%</div>
<div class="t" style="left:1794.26px;top:320.27px;font-size:11.5px;line-height:11.5px;font-weight:400;color:#111;transform:scaleX(1.1100);transform-origin:left;">0.0000%</div>
<div class="t" style="left:359.20px;top:340.27px;font-size:11.5px;line-height:11.5px;font-weight:700;color:#161616;transform:scaleX(1.0329);transform-origin:left;">National Insurance Rate - above</div>
<div class="t" style="left:582.76px;top:340.27px;font-size:11.5px;line-height:11.5px;font-weight:400;color:#111;transform:scaleX(1.1100);transform-origin:left;">15.0000%</div>
<div class="t" style="left:820.16px;top:340.27px;font-size:11.5px;line-height:11.5px;font-weight:400;color:#111;transform:scaleX(1.1100);transform-origin:left;">15.0000%</div>
<div class="t" style="left:905.76px;top:340.27px;font-size:11.5px;line-height:11.5px;font-weight:400;color:#60806b;transform:scaleX(1.1100);transform-origin:left;">15.0000%</div>
<div class="t" style="left:1142.16px;top:340.27px;font-size:11.5px;line-height:11.5px;font-weight:400;color:#111;transform:scaleX(1.1100);transform-origin:left;">15.0000%</div>
<div class="t" style="left:1227.76px;top:340.27px;font-size:11.5px;line-height:11.5px;font-weight:400;color:#60806b;transform:scaleX(1.1100);transform-origin:left;">15.0000%</div>
<div class="t" style="left:1464.16px;top:340.27px;font-size:11.5px;line-height:11.5px;font-weight:400;color:#111;transform:scaleX(1.1100);transform-origin:left;">15.0000%</div>
<div class="t" style="left:1549.76px;top:340.27px;font-size:11.5px;line-height:11.5px;font-weight:400;color:#60806b;transform:scaleX(1.1100);transform-origin:left;">15.0000%</div>
<div class="t" style="left:1787.16px;top:340.27px;font-size:11.5px;line-height:11.5px;font-weight:400;color:#111;transform:scaleX(1.1100);transform-origin:left;">15.0000%</div>
<div class="t" style="left:359.20px;top:360.27px;font-size:11.5px;line-height:11.5px;font-weight:700;color:#161616;transform:scaleX(1.0171);transform-origin:left;">National Insurance Secondary Th...</div>
<div class="t" style="left:594.30px;top:360.27px;font-size:11.5px;line-height:11.5px;font-weight:400;color:#111;transform:scaleX(1.1100);transform-origin:left;">£416.67</div>
<div class="t" style="left:831.70px;top:360.27px;font-size:11.5px;line-height:11.5px;font-weight:400;color:#111;transform:scaleX(1.1100);transform-origin:left;">£416.67</div>
<div class="t" style="left:917.30px;top:360.27px;font-size:11.5px;line-height:11.5px;font-weight:400;color:#60806b;transform:scaleX(1.1100);transform-origin:left;">£416.67</div>
<div class="t" style="left:1153.70px;top:360.27px;font-size:11.5px;line-height:11.5px;font-weight:400;color:#111;transform:scaleX(1.1100);transform-origin:left;">£416.67</div>
<div class="t" style="left:1239.30px;top:360.27px;font-size:11.5px;line-height:11.5px;font-weight:400;color:#60806b;transform:scaleX(1.1100);transform-origin:left;">£416.67</div>
<div class="t" style="left:1475.70px;top:360.27px;font-size:11.5px;line-height:11.5px;font-weight:400;color:#111;transform:scaleX(1.1100);transform-origin:left;">£416.67</div>
<div class="t" style="left:1561.30px;top:360.27px;font-size:11.5px;line-height:11.5px;font-weight:400;color:#60806b;transform:scaleX(1.1100);transform-origin:left;">£416.67</div>
<div class="t" style="left:1798.70px;top:360.27px;font-size:11.5px;line-height:11.5px;font-weight:400;color:#111;transform:scaleX(1.1100);transform-origin:left;">£416.67</div>
<div class="t" style="left:359.20px;top:380.27px;font-size:11.5px;line-height:11.5px;font-weight:700;color:#161616;transform:scaleX(1.0273);transform-origin:left;">National Insurance Upper Earnin...</div>
<div class="t" style="left:583.65px;top:380.27px;font-size:11.5px;line-height:11.5px;font-weight:400;color:#60806b;transform:scaleX(1.1100);transform-origin:left;">£4,189.00</div>
<div class="t" style="left:821.05px;top:380.27px;font-size:11.5px;line-height:11.5px;font-weight:400;color:#111;transform:scaleX(1.1100);transform-origin:left;">£4,189.00</div>
<div class="t" style="left:906.65px;top:380.27px;font-size:11.5px;line-height:11.5px;font-weight:400;color:#60806b;transform:scaleX(1.1100);transform-origin:left;">£4,189.00</div>
<div class="t" style="left:1143.05px;top:380.27px;font-size:11.5px;line-height:11.5px;font-weight:400;color:#111;transform:scaleX(1.1100);transform-origin:left;">£4,189.00</div>
<div class="t" style="left:1228.65px;top:380.27px;font-size:11.5px;line-height:11.5px;font-weight:400;color:#60806b;transform:scaleX(1.1100);transform-origin:left;">£4,189.00</div>
<div class="t" style="left:1465.05px;top:380.27px;font-size:11.5px;line-height:11.5px;font-weight:400;color:#111;transform:scaleX(1.1100);transform-origin:left;">£4,189.00</div>
<div class="t" style="left:1550.65px;top:380.27px;font-size:11.5px;line-height:11.5px;font-weight:400;color:#60806b;transform:scaleX(1.1100);transform-origin:left;">£4,189.00</div>
<div class="t" style="left:1788.05px;top:380.27px;font-size:11.5px;line-height:11.5px;font-weight:400;color:#111;transform:scaleX(1.1100);transform-origin:left;">£4,189.00</div>
<div class="t" style="left:359.20px;top:400.27px;font-size:11.5px;line-height:11.5px;font-weight:700;color:#161616;transform:scaleX(0.9650);transform-origin:left;">TLR1a</div>
<div class="t" style="left:594.30px;top:400.27px;font-size:11.5px;line-height:11.5px;font-weight:400;color:#60806b;transform:scaleX(1.1100);transform-origin:left;">£815.17</div>
<div class="t" style="left:831.70px;top:400.27px;font-size:11.5px;line-height:11.5px;font-weight:400;color:#111;transform:scaleX(1.1100);transform-origin:left;">£815.17</div>
<div class="t" style="left:917.30px;top:400.27px;font-size:11.5px;line-height:11.5px;font-weight:400;color:#60806b;transform:scaleX(1.1100);transform-origin:left;">£847.83</div>
<div class="t" style="left:1153.70px;top:400.27px;font-size:11.5px;line-height:11.5px;font-weight:400;color:#111;transform:scaleX(1.1100);transform-origin:left;">£847.83</div>
<div class="t" style="left:1239.30px;top:400.27px;font-size:11.5px;line-height:11.5px;font-weight:400;color:#60806b;transform:scaleX(1.1100);transform-origin:left;">£847.83</div>
<div class="t" style="left:1475.70px;top:400.27px;font-size:11.5px;line-height:11.5px;font-weight:400;color:#111;transform:scaleX(1.1100);transform-origin:left;">£847.83</div>
<div class="t" style="left:1561.30px;top:400.27px;font-size:11.5px;line-height:11.5px;font-weight:400;color:#60806b;transform:scaleX(1.1100);transform-origin:left;">£847.83</div>
<div class="t" style="left:1798.70px;top:400.27px;font-size:11.5px;line-height:11.5px;font-weight:400;color:#111;transform:scaleX(1.1100);transform-origin:left;">£847.83</div>
<div class="t" style="left:359.20px;top:420.27px;font-size:11.5px;line-height:11.5px;font-weight:700;color:#161616;transform:scaleX(0.9930);transform-origin:left;">TLR1b</div>
<div class="t" style="left:583.65px;top:420.27px;font-size:11.5px;line-height:11.5px;font-weight:400;color:#60806b;transform:scaleX(1.1100);transform-origin:left;">£1,379.42</div>
<div class="t" style="left:821.05px;top:420.27px;font-size:11.5px;line-height:11.5px;font-weight:400;color:#111;transform:scaleX(1.1100);transform-origin:left;">£1,379.42</div>
<div class="t" style="left:906.65px;top:420.27px;font-size:11.5px;line-height:11.5px;font-weight:400;color:#60806b;transform:scaleX(1.1100);transform-origin:left;">£1,434.67</div>
<div class="t" style="left:1143.05px;top:420.27px;font-size:11.5px;line-height:11.5px;font-weight:400;color:#111;transform:scaleX(1.1100);transform-origin:left;">£1,434.67</div>
<div class="t" style="left:1228.65px;top:420.27px;font-size:11.5px;line-height:11.5px;font-weight:400;color:#60806b;transform:scaleX(1.1100);transform-origin:left;">£1,434.67</div>
<div class="t" style="left:1465.05px;top:420.27px;font-size:11.5px;line-height:11.5px;font-weight:400;color:#111;transform:scaleX(1.1100);transform-origin:left;">£1,434.67</div>
<div class="t" style="left:1550.65px;top:420.27px;font-size:11.5px;line-height:11.5px;font-weight:400;color:#60806b;transform:scaleX(1.1100);transform-origin:left;">£1,434.67</div>
<div class="t" style="left:1788.05px;top:420.27px;font-size:11.5px;line-height:11.5px;font-weight:400;color:#111;transform:scaleX(1.1100);transform-origin:left;">£1,434.67</div>
<div class="t" style="left:359.20px;top:440.27px;font-size:11.5px;line-height:11.5px;font-weight:700;color:#161616;transform:scaleX(0.9650);transform-origin:left;">TLR2a</div>
<div class="t" style="left:594.30px;top:440.27px;font-size:11.5px;line-height:11.5px;font-weight:400;color:#60806b;transform:scaleX(1.1100);transform-origin:left;">£282.58</div>
<div class="t" style="left:831.70px;top:440.27px;font-size:11.5px;line-height:11.5px;font-weight:400;color:#111;transform:scaleX(1.1100);transform-origin:left;">£282.58</div>
<div class="t" style="left:917.30px;top:440.27px;font-size:11.5px;line-height:11.5px;font-weight:400;color:#60806b;transform:scaleX(1.1100);transform-origin:left;">£293.92</div>
<div class="t" style="left:1153.70px;top:440.27px;font-size:11.5px;line-height:11.5px;font-weight:400;color:#111;transform:scaleX(1.1100);transform-origin:left;">£293.92</div>
<div class="t" style="left:1239.30px;top:440.27px;font-size:11.5px;line-height:11.5px;font-weight:400;color:#60806b;transform:scaleX(1.1100);transform-origin:left;">£293.92</div>
<div class="t" style="left:1475.70px;top:440.27px;font-size:11.5px;line-height:11.5px;font-weight:400;color:#111;transform:scaleX(1.1100);transform-origin:left;">£293.92</div>
<div class="t" style="left:1561.30px;top:440.27px;font-size:11.5px;line-height:11.5px;font-weight:400;color:#60806b;transform:scaleX(1.1100);transform-origin:left;">£293.92</div>
<div class="t" style="left:1798.70px;top:440.27px;font-size:11.5px;line-height:11.5px;font-weight:400;color:#111;transform:scaleX(1.1100);transform-origin:left;">£293.92</div>
<div class="t" style="left:359.20px;top:460.27px;font-size:11.5px;line-height:11.5px;font-weight:700;color:#161616;transform:scaleX(0.9930);transform-origin:left;">TLR2b</div>
<div class="t" style="left:594.30px;top:460.27px;font-size:11.5px;line-height:11.5px;font-weight:400;color:#60806b;transform:scaleX(1.1100);transform-origin:left;">£470.50</div>
<div class="t" style="left:831.70px;top:460.27px;font-size:11.5px;line-height:11.5px;font-weight:400;color:#111;transform:scaleX(1.1100);transform-origin:left;">£470.50</div>
<div class="t" style="left:917.30px;top:460.27px;font-size:11.5px;line-height:11.5px;font-weight:400;color:#60806b;transform:scaleX(1.1100);transform-origin:left;">£470.50</div>
<div class="t" style="left:1153.70px;top:460.27px;font-size:11.5px;line-height:11.5px;font-weight:400;color:#111;transform:scaleX(1.1100);transform-origin:left;">£470.50</div>
<div class="t" style="left:1239.30px;top:460.27px;font-size:11.5px;line-height:11.5px;font-weight:400;color:#60806b;transform:scaleX(1.1100);transform-origin:left;">£470.50</div>
<div class="t" style="left:1475.70px;top:460.27px;font-size:11.5px;line-height:11.5px;font-weight:400;color:#111;transform:scaleX(1.1100);transform-origin:left;">£470.50</div>
<div class="t" style="left:1561.30px;top:460.27px;font-size:11.5px;line-height:11.5px;font-weight:400;color:#60806b;transform:scaleX(1.1100);transform-origin:left;">£470.50</div>
<div class="t" style="left:1798.70px;top:460.27px;font-size:11.5px;line-height:11.5px;font-weight:400;color:#111;transform:scaleX(1.1100);transform-origin:left;">£470.50</div>
<div class="t" style="left:359.20px;top:480.27px;font-size:11.5px;line-height:11.5px;font-weight:700;color:#161616;transform:scaleX(0.9650);transform-origin:left;">TLR3a</div>
<div class="t" style="left:601.40px;top:480.27px;font-size:11.5px;line-height:11.5px;font-weight:400;color:#60806b;transform:scaleX(1.1100);transform-origin:left;">£56.25</div>
<div class="t" style="left:838.80px;top:480.27px;font-size:11.5px;line-height:11.5px;font-weight:400;color:#111;transform:scaleX(1.1100);transform-origin:left;">£56.25</div>
<div class="t" style="left:924.40px;top:480.27px;font-size:11.5px;line-height:11.5px;font-weight:400;color:#60806b;transform:scaleX(1.1100);transform-origin:left;">£58.50</div>
<div class="t" style="left:1160.80px;top:480.27px;font-size:11.5px;line-height:11.5px;font-weight:400;color:#111;transform:scaleX(1.1100);transform-origin:left;">£58.50</div>
<div class="t" style="left:1246.40px;top:480.27px;font-size:11.5px;line-height:11.5px;font-weight:400;color:#60806b;transform:scaleX(1.1100);transform-origin:left;">£58.50</div>
<div class="t" style="left:1482.80px;top:480.27px;font-size:11.5px;line-height:11.5px;font-weight:400;color:#111;transform:scaleX(1.1100);transform-origin:left;">£58.50</div>
<div class="t" style="left:1568.40px;top:480.27px;font-size:11.5px;line-height:11.5px;font-weight:400;color:#60806b;transform:scaleX(1.1100);transform-origin:left;">£58.50</div>
<div class="t" style="left:1805.80px;top:480.27px;font-size:11.5px;line-height:11.5px;font-weight:400;color:#111;transform:scaleX(1.1100);transform-origin:left;">£58.50</div>
<div class="t" style="left:359.20px;top:500.27px;font-size:11.5px;line-height:11.5px;font-weight:700;color:#161616;transform:scaleX(0.9930);transform-origin:left;">TLR3b</div>
<div class="t" style="left:594.30px;top:500.27px;font-size:11.5px;line-height:11.5px;font-weight:400;color:#60806b;transform:scaleX(1.1100);transform-origin:left;">£278.67</div>
<div class="t" style="left:831.70px;top:500.27px;font-size:11.5px;line-height:11.5px;font-weight:400;color:#111;transform:scaleX(1.1100);transform-origin:left;">£278.67</div>
<div class="t" style="left:917.30px;top:500.27px;font-size:11.5px;line-height:11.5px;font-weight:400;color:#60806b;transform:scaleX(1.1100);transform-origin:left;">£289.83</div>
<div class="t" style="left:1153.70px;top:500.27px;font-size:11.5px;line-height:11.5px;font-weight:400;color:#111;transform:scaleX(1.1100);transform-origin:left;">£289.83</div>
<div class="t" style="left:1239.30px;top:500.27px;font-size:11.5px;line-height:11.5px;font-weight:400;color:#60806b;transform:scaleX(1.1100);transform-origin:left;">£289.83</div>
<div class="t" style="left:1475.70px;top:500.27px;font-size:11.5px;line-height:11.5px;font-weight:400;color:#111;transform:scaleX(1.1100);transform-origin:left;">£289.83</div>
<div class="t" style="left:1561.30px;top:500.27px;font-size:11.5px;line-height:11.5px;font-weight:400;color:#60806b;transform:scaleX(1.1100);transform-origin:left;">£289.83</div>
<div class="t" style="left:1798.70px;top:500.27px;font-size:11.5px;line-height:11.5px;font-weight:400;color:#111;transform:scaleX(1.1100);transform-origin:left;">£289.83</div>
<div class="t" style="left:359.20px;top:520.27px;font-size:11.5px;line-height:11.5px;font-weight:700;color:#161616;transform:scaleX(0.9626);transform-origin:left;">SENa</div>
<div class="t" style="left:594.30px;top:520.27px;font-size:11.5px;line-height:11.5px;font-weight:400;color:#60806b;transform:scaleX(1.1100);transform-origin:left;">£223.25</div>
<div class="t" style="left:831.70px;top:520.27px;font-size:11.5px;line-height:11.5px;font-weight:400;color:#111;transform:scaleX(1.1100);transform-origin:left;">£223.25</div>
<div class="t" style="left:917.30px;top:520.27px;font-size:11.5px;line-height:11.5px;font-weight:400;color:#60806b;transform:scaleX(1.1100);transform-origin:left;">£232.25</div>
<div class="t" style="left:1153.70px;top:520.27px;font-size:11.5px;line-height:11.5px;font-weight:400;color:#111;transform:scaleX(1.1100);transform-origin:left;">£232.25</div>
<div class="t" style="left:1239.30px;top:520.27px;font-size:11.5px;line-height:11.5px;font-weight:400;color:#60806b;transform:scaleX(1.1100);transform-origin:left;">£232.25</div>
<div class="t" style="left:1475.70px;top:520.27px;font-size:11.5px;line-height:11.5px;font-weight:400;color:#111;transform:scaleX(1.1100);transform-origin:left;">£232.25</div>
<div class="t" style="left:1561.30px;top:520.27px;font-size:11.5px;line-height:11.5px;font-weight:400;color:#60806b;transform:scaleX(1.1100);transform-origin:left;">£232.25</div>
<div class="t" style="left:1798.70px;top:520.27px;font-size:11.5px;line-height:11.5px;font-weight:400;color:#111;transform:scaleX(1.1100);transform-origin:left;">£232.25</div>
<div class="t" style="left:359.20px;top:540.27px;font-size:11.5px;line-height:11.5px;font-weight:700;color:#161616;transform:scaleX(0.9626);transform-origin:left;">SENb</div>
<div class="t" style="left:594.30px;top:540.27px;font-size:11.5px;line-height:11.5px;font-weight:400;color:#60806b;transform:scaleX(1.1100);transform-origin:left;">£440.42</div>
<div class="t" style="left:831.70px;top:540.27px;font-size:11.5px;line-height:11.5px;font-weight:400;color:#111;transform:scaleX(1.1100);transform-origin:left;">£440.42</div>
<div class="t" style="left:917.30px;top:540.27px;font-size:11.5px;line-height:11.5px;font-weight:400;color:#60806b;transform:scaleX(1.1100);transform-origin:left;">£458.08</div>
<div class="t" style="left:1153.70px;top:540.27px;font-size:11.5px;line-height:11.5px;font-weight:400;color:#111;transform:scaleX(1.1100);transform-origin:left;">£458.08</div>
<div class="t" style="left:1239.30px;top:540.27px;font-size:11.5px;line-height:11.5px;font-weight:400;color:#60806b;transform:scaleX(1.1100);transform-origin:left;">£458.08</div>
<div class="t" style="left:1475.70px;top:540.27px;font-size:11.5px;line-height:11.5px;font-weight:400;color:#111;transform:scaleX(1.1100);transform-origin:left;">£458.08</div>
<div class="t" style="left:1561.30px;top:540.27px;font-size:11.5px;line-height:11.5px;font-weight:400;color:#60806b;transform:scaleX(1.1100);transform-origin:left;">£458.08</div>
<div class="t" style="left:1798.70px;top:540.27px;font-size:11.5px;line-height:11.5px;font-weight:400;color:#111;transform:scaleX(1.1100);transform-origin:left;">£458.08</div>
<div class="t" style="left:359.20px;top:560.27px;font-size:11.5px;line-height:11.5px;font-weight:700;color:#161616;transform:scaleX(1.0238);transform-origin:left;">Percentage salary increase teach...</div>
<div class="t" style="left:359.20px;top:580.27px;font-size:11.5px;line-height:11.5px;font-weight:700;color:#161616;transform:scaleX(1.0219);transform-origin:left;">Percentage salary increase supp...</div>
<div class="t" style="left:359.20px;top:600.27px;font-size:11.5px;line-height:11.5px;font-weight:700;color:#161616;transform:scaleX(1.0127);transform-origin:left;">SMP threshold</div>
<div class="t" style="left:594.30px;top:600.27px;font-size:11.5px;line-height:11.5px;font-weight:400;color:#111;transform:scaleX(1.1100);transform-origin:left;">£187.18</div>
<div class="t" style="left:831.70px;top:600.27px;font-size:11.5px;line-height:11.5px;font-weight:400;color:#111;transform:scaleX(1.1100);transform-origin:left;">£187.18</div>
<div class="t" style="left:917.30px;top:600.27px;font-size:11.5px;line-height:11.5px;font-weight:400;color:#111;transform:scaleX(1.1100);transform-origin:left;">£194.32</div>
<div class="t" style="left:1153.70px;top:600.27px;font-size:11.5px;line-height:11.5px;font-weight:400;color:#111;transform:scaleX(1.1100);transform-origin:left;">£194.32</div>
<div class="t" style="left:1239.30px;top:600.27px;font-size:11.5px;line-height:11.5px;font-weight:400;color:#60806b;transform:scaleX(1.1100);transform-origin:left;">£194.32</div>
<div class="t" style="left:1475.70px;top:600.27px;font-size:11.5px;line-height:11.5px;font-weight:400;color:#111;transform:scaleX(1.1100);transform-origin:left;">£194.32</div>
<div class="t" style="left:1561.30px;top:600.27px;font-size:11.5px;line-height:11.5px;font-weight:400;color:#60806b;transform:scaleX(1.1100);transform-origin:left;">£194.32</div>
<div class="t" style="left:1798.70px;top:600.27px;font-size:11.5px;line-height:11.5px;font-weight:400;color:#111;transform:scaleX(1.1100);transform-origin:left;">£194.32</div>
<div class="t" style="left:359.20px;top:620.27px;font-size:11.5px;line-height:11.5px;font-weight:700;color:#161616;transform:scaleX(1.0490);transform-origin:left;">Deduction rebate claim</div>
<div class="t" style="left:582.76px;top:620.27px;font-size:11.5px;line-height:11.5px;font-weight:400;color:#60806b;transform:scaleX(1.1100);transform-origin:left;">92.0000%</div>
<div class="t" style="left:820.16px;top:620.27px;font-size:11.5px;line-height:11.5px;font-weight:400;color:#111;transform:scaleX(1.1100);transform-origin:left;">92.0000%</div>
<div class="t" style="left:905.76px;top:620.27px;font-size:11.5px;line-height:11.5px;font-weight:400;color:#60806b;transform:scaleX(1.1100);transform-origin:left;">92.0000%</div>
<div class="t" style="left:1142.16px;top:620.27px;font-size:11.5px;line-height:11.5px;font-weight:400;color:#111;transform:scaleX(1.1100);transform-origin:left;">92.0000%</div>
<div class="t" style="left:1227.76px;top:620.27px;font-size:11.5px;line-height:11.5px;font-weight:400;color:#60806b;transform:scaleX(1.1100);transform-origin:left;">92.0000%</div>
<div class="t" style="left:1464.16px;top:620.27px;font-size:11.5px;line-height:11.5px;font-weight:400;color:#111;transform:scaleX(1.1100);transform-origin:left;">92.0000%</div>
<div class="t" style="left:1549.76px;top:620.27px;font-size:11.5px;line-height:11.5px;font-weight:400;color:#60806b;transform:scaleX(1.1100);transform-origin:left;">92.0000%</div>
<div class="t" style="left:1787.16px;top:620.27px;font-size:11.5px;line-height:11.5px;font-weight:400;color:#111;transform:scaleX(1.1100);transform-origin:left;">92.0000%</div>
</body></html>
